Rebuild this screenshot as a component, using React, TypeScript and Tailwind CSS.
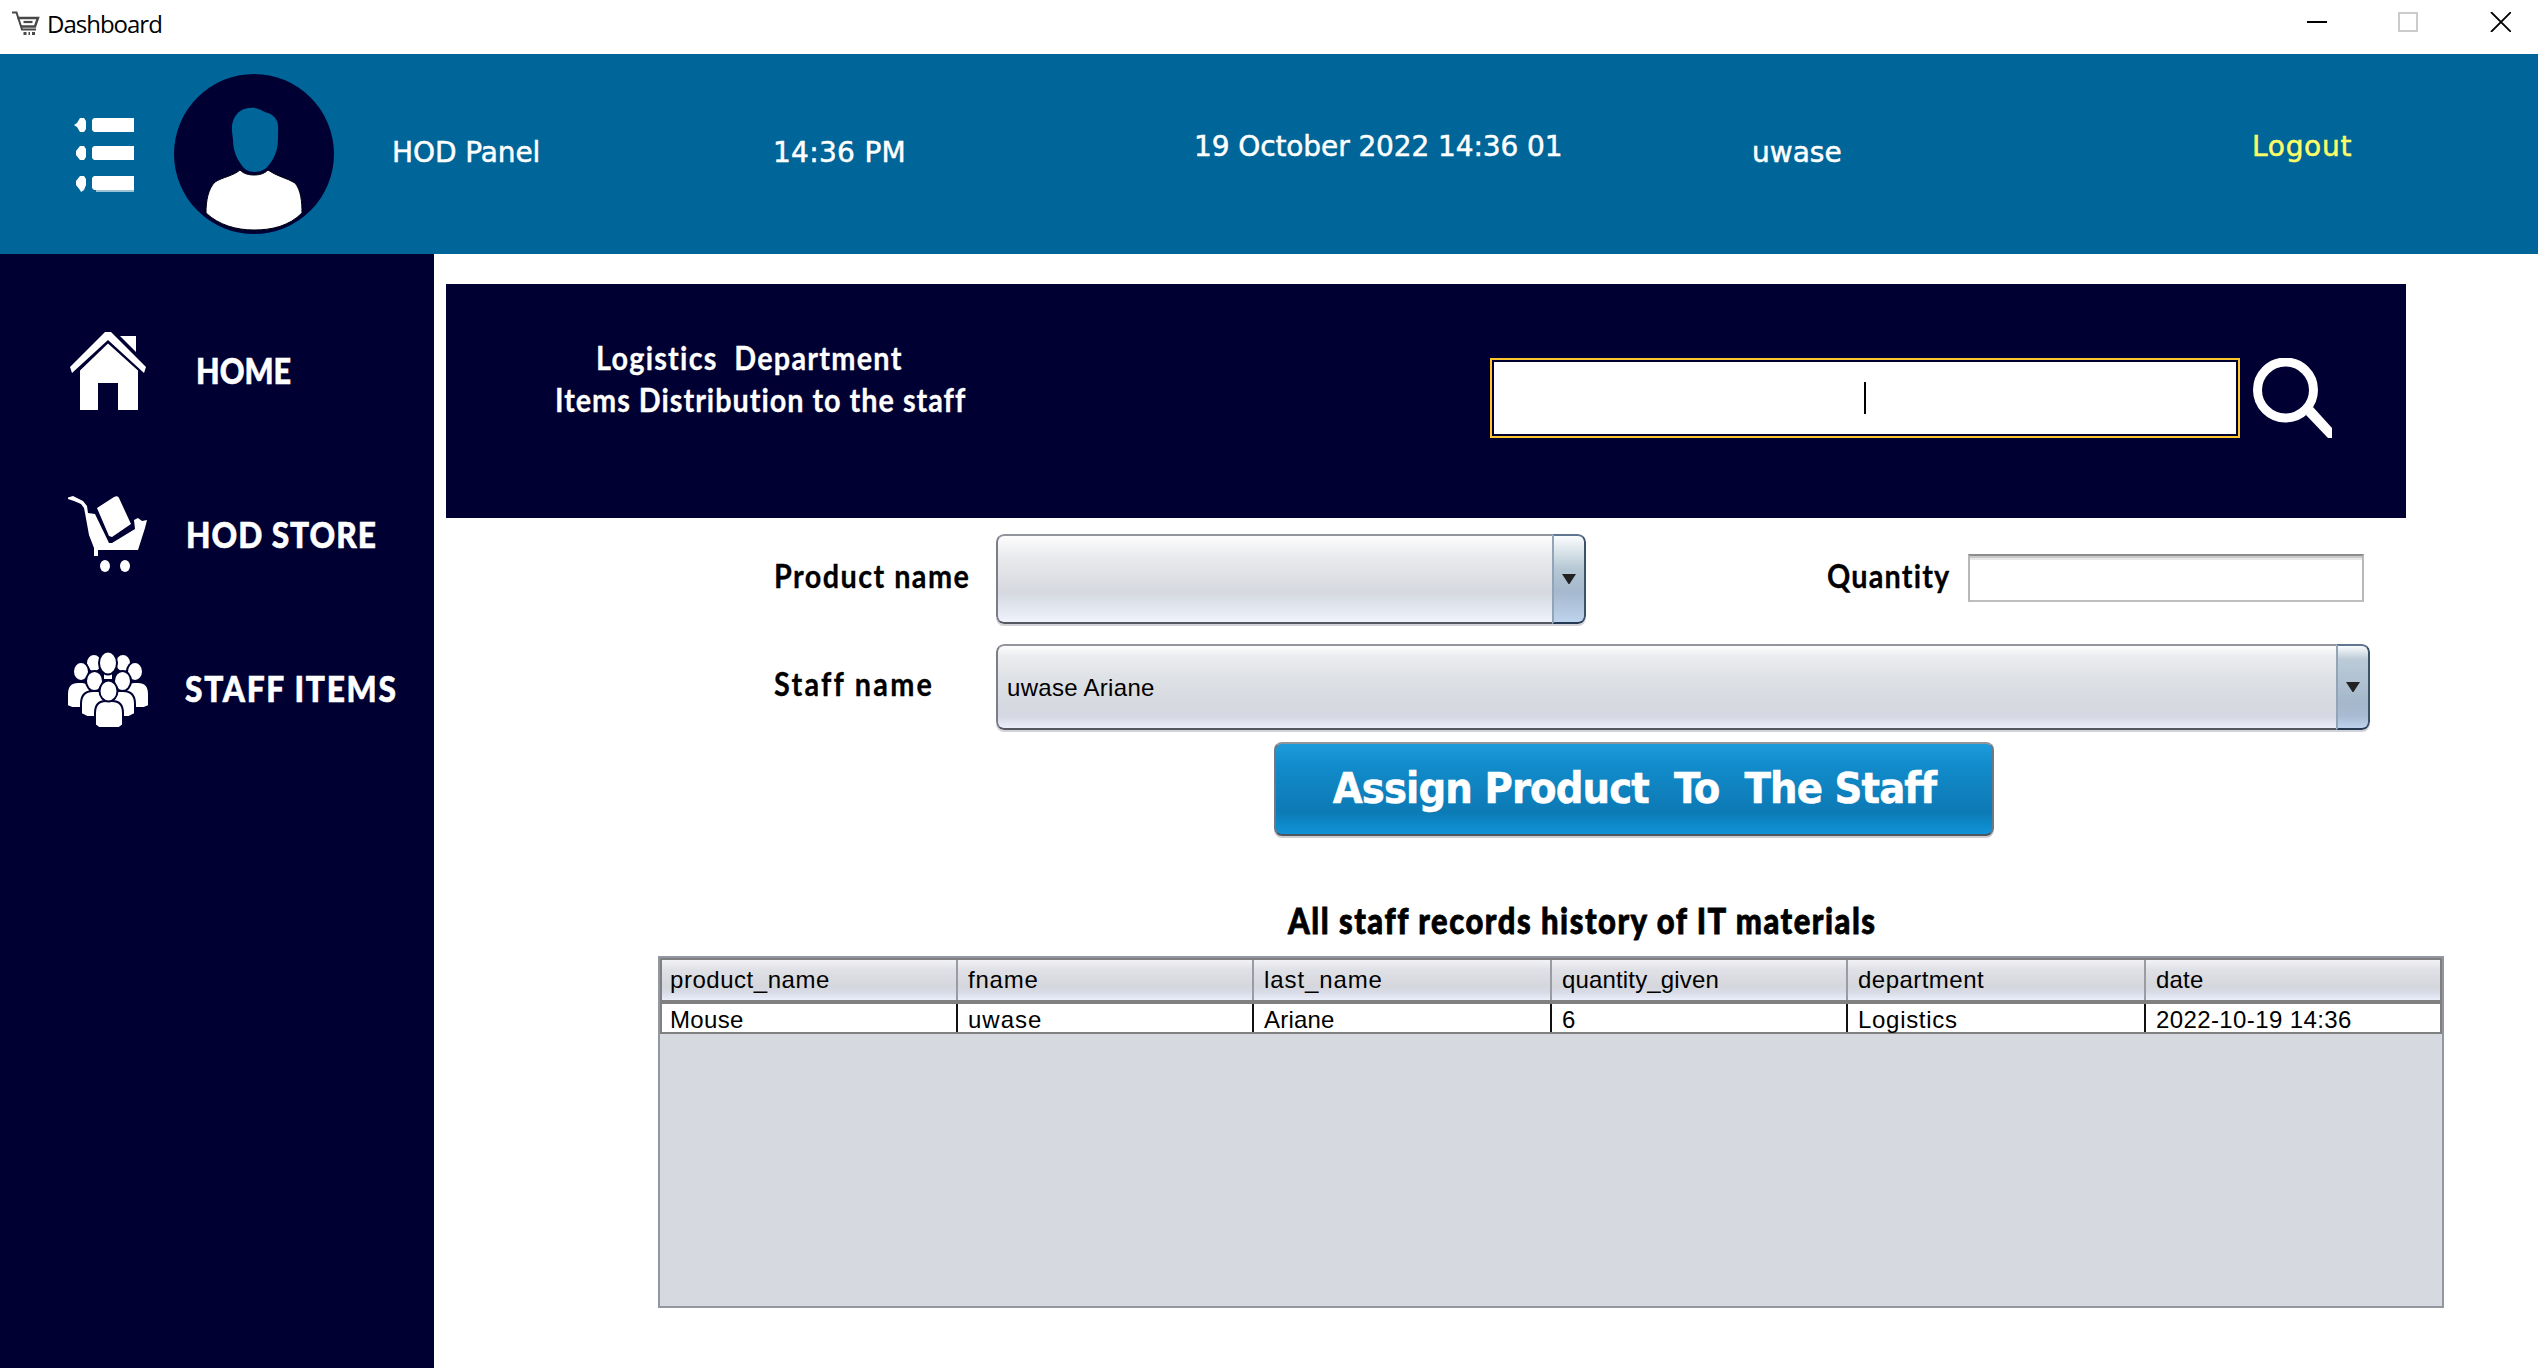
const HEAD = "font-['DejaVu_Sans',sans-serif] text-[28px] leading-[40px] [-webkit-text-stroke:0.5px]";
const NAV = "mt-[18px] origin-left font-['Lato',sans-serif] text-[36px] leading-[40px] font-black text-white [-webkit-text-stroke:0.6px]";
const FUTURA = "origin-left scale-x-90 font-['Lato',sans-serif] text-[32px] font-bold [-webkit-text-stroke:0.3px]";
const CELL = "font-['Liberation_Sans',Arial,sans-serif] text-[24px] text-black";

function Text({ className, children }: { className: string; children: string }) {
  return <span className={"block whitespace-pre " + className}>{children}</span>;
}

const HomeIcon = () => (
  <svg viewBox="0 0 80 80" className="size-20 shrink-0" fill="#fff">
    <path d="M37 0h6l35 35-2 6L40 8 4 41l-2-6z" />
    <path d="M52 4h16v16z" />
    <path d="M40 11.500l30 27v39.500H50V51H30v27H12V38.500z" />
  </svg>
);

const StoreIcon = () => (
  <svg viewBox="0 0 80 80" className="size-20 shrink-0" fill="#fff">
    <path d="M0 1.500L5 0l10 5 4 5 1 7 7 1 14 29h3l23-14-1-9 4-2 4 3 5-1-2 8-7 22H30v6h-4v-8l-5-13-4-22-1-5-3-4-7-3-6-2z" />
    <path d="M29 12L46 1q4-2 5 1l12 26-19 13-3-1z" />
    <ellipse cx="37" cy="70" rx="5" ry="6" />
    <ellipse cx="57" cy="70" rx="5" ry="6" />
  </svg>
);

const StaffIcon = () => (
  <svg viewBox="0 0 80 80" className="size-20 shrink-0" fill="#fff" stroke="#000033" strokeWidth="2">
    <ellipse cx="26" cy="11" rx="8" ry="9" />
    <ellipse cx="55" cy="11" rx="8" ry="9" />
    <path d="M35 21h10v7H35z" />
    <ellipse cx="40" cy="11" rx="9" ry="11.500" />
    <path d="M-1 54V42q0-12 11-12h4q7 0 8 8v18H4zM81 54V42q0-12-11-12h-4q-7 0-8 8v18h18z" />
    <ellipse cx="13" cy="19.500" rx="8" ry="9.500" />
    <ellipse cx="67" cy="19.500" rx="8" ry="9.500" />
    <path d="M13 62V52q0-13 12-13h6q6 0 6 8v18H19zM67 62V52q0-13-12-13h-6q-6 0-6 8v18h18z" />
    <ellipse cx="26.500" cy="29" rx="8.500" ry="10" />
    <ellipse cx="54.500" cy="29" rx="8.500" ry="10" />
    <path d="M27 73V61q0-12 11-12h6q11 0 11 12v12l-4 3H31z" />
    <ellipse cx="40.500" cy="39" rx="9" ry="10.500" />
  </svg>
);

const ITEMS = [
  { label: "HOME", icon: <HomeIcon />, row: "mt-[78px]", text: "ml-[48px] scale-x-[0.85]" },
  { label: "HOD STORE", icon: <StoreIcon />, row: "mt-[84px]", text: "ml-[38px] scale-x-[0.88] tracking-[1.1px]" },
  { label: "STAFF ITEMS", icon: <StaffIcon />, row: "mt-[76px]", text: "ml-[37px] -translate-y-0.5 scale-x-[0.88] tracking-[1.95px]" },
];

const COLUMNS = [
  { name: "product_name", tracking: "tracking-[0.54px]" },
  { name: "fname", tracking: "tracking-[0.79px]" },
  { name: "last_name", tracking: "tracking-[0.9px]" },
  { name: "quantity_given", tracking: "tracking-[0.16px]" },
  { name: "department", tracking: "tracking-[0.47px]" },
  { name: "date", tracking: "tracking-[0.21px]" },
];
const RECORD = [
  { value: "Mouse", tracking: "tracking-[0.33px]" },
  { value: "uwase", tracking: "tracking-[1px]" },
  { value: "Ariane", tracking: "tracking-[0.19px]" },
  { value: "6", tracking: "" },
  { value: "Logistics", tracking: "tracking-[0.7px]" },
  { value: "2022-10-19 14:36", tracking: "tracking-[0.39px]" },
];

function Combo({ size, face, arrow, value }: { size: string; face: string; arrow: string; value: string }) {
  return (
    <div className={"flex overflow-hidden rounded-[8px] shadow-[0_2px_0_#d2d3d8] " + size}>
      <div className={"flex flex-1 items-center rounded-l-[8px] border-y-2 border-l-2 border-t-[#92959b] border-b-[#555860] border-l-[#7b7e86] pl-[9px] " + face}>
        <Text className={CELL + " pt-px leading-[28px] tracking-[0.3px]"}>{value}</Text>
      </div>
      <div className={"flex w-[34px] items-center justify-center rounded-r-[8px] border-2 border-t-[#5f7690] border-r-[#3c526b] border-b-[#253a52] border-l-[#92a4b6] " + arrow}>
        <svg viewBox="0 0 14 10" className="h-[10px] w-[14px]" fill="#222">
          <path d="M0 0h14L7.500 10h-1z" />
        </svg>
      </div>
    </div>
  );
}

export default function App() {
  return (
    <div className="flex h-[1368px] w-[2538px] flex-col overflow-hidden bg-white">
      <div className="flex h-[54px] items-start">
        <svg viewBox="0 0 28 25" className="mt-[11px] ml-[12px] h-[25px] w-[28px]" fill="none" stroke="#484848" strokeWidth="2">
          <path d="M0 1.500h4.500L10 18.500h14" />
          <path d="M5.500 7h20.500L23 15.500H9" strokeWidth="2.400" />
          <path d="M11.500 11h9" strokeWidth="2.200" />
          <path d="M11.500 22.500h3M16.500 22.500h1.500M20 22.500h3" strokeWidth="3" />
        </svg>
        <Text className="mt-[4px] ml-[7px] flex-1 font-['Open_Sans',sans-serif] text-[24px] leading-[40px] tracking-[-1px] text-black">Dashboard</Text>
        <svg viewBox="0 0 204 20" className="mt-[12px] mr-[27px] h-[20px] w-[204px]" fill="none">
          <path d="M0 10h20" stroke="#000" strokeWidth="2" />
          <path d="M92 1h18v18H92z" stroke="#ccc" strokeWidth="2" />
          <path d="M184 0l20 20M204 0l-20 20" stroke="#000" strokeWidth="1.800" />
        </svg>
      </div>

      <header className="flex h-[200px] items-start bg-[#006699] text-white">
        <svg viewBox="0 0 60 74" className="mt-[64px] ml-[74px] h-[74px] w-[60px]" fill="#fff">
          <path d="M20 0h40v14H20l-2-2V2zM20 28h40v14H20l-2-2V30zM20 58h40v14H20l-2-2V60z" />
          <path d="M22 72h38v2H22z" opacity=".6" />
          <path d="M6 0h4l2 3v8l-2 3H6l-3-5-3-2 3-2zM6 28h4l2 3v8l-2 3H6l-4-5v-4zM6 58h4l2 3v6l-2 5-3 2-1-2-4-5v-4z" />
        </svg>
        <svg viewBox="0 0 160 160" className="mt-5 ml-[40px] size-[160px]">
          <circle cx="80" cy="80" r="80" fill="#000033" />
          <path d="M76 34c8-1 12 3 18 5 8 3 11 9 10 19v8c0 14-8 25-13 29-6 4-15 4-20 0-5-5-12-15-12-29l-1-9c-1-13 7-23 18-23z" fill="#006699" />
          <path d="M66 96c4 4 9 5 14 5s10-1 14-5c8 6 19 8 27 13 6 7 7 19 7 30-13 13-30 17-48 17s-35-5-48-17c0-12 2-24 9-31 8-5 18-6 25-12z" fill="#fff" stroke="#00000f" strokeWidth="1" />
        </svg>
        <Text className={HEAD + " mt-[79px] ml-[58px] w-[381px] tracking-[-0.1px]"}>HOD Panel</Text>
        <Text className={HEAD + " mt-[79px] w-[421px] tracking-[0.3px]"}>14:36 PM</Text>
        <Text className={HEAD + " mt-[73px] w-[558px] tracking-[-0.1px]"}>19 October 2022 14:36 01</Text>
        <Text className={HEAD + " mt-[79px] w-[500px]"}>uwase</Text>
        <Text className={HEAD + " mt-[73px] tracking-[0.7px] text-[#ffff66]"}>Logout</Text>
      </header>

      <div className="flex flex-1">
        <aside className="flex w-[434px] flex-col bg-[#000033]">
          {ITEMS.map((it) => (
            <div key={it.label} className={"flex h-20 items-start pl-[68px] " + it.row}>
              {it.icon}
              <Text className={NAV + " " + it.text}>{it.label}</Text>
            </div>
          ))}
        </aside>

        <main className="flex flex-1 flex-col items-start">
          <section className="mt-[30px] ml-3 flex h-[234px] w-[1960px] items-start bg-[#000033]">
            <div className="mt-[53px] w-[1044px] pl-[109px] leading-[42px] text-white">
              <Text className={FUTURA + " ml-[41px] tracking-[1.4px]"}>{"Logistics  Department"}</Text>
              <Text className={FUTURA + " tracking-[1.1px]"}>Items Distribution to the staff</Text>
            </div>
            <div className="mt-[74px] h-20 w-[750px] border-2 border-[#ffc72c] p-0.5">
              <div className="flex h-full items-start justify-center bg-white pt-5">
                <div className="h-8 w-0.5 bg-black" />
              </div>
            </div>
            <svg viewBox="0 0 80 80" className="mt-[74px] ml-3 size-20" fill="#fff">
              <circle cx="33.500" cy="32" r="28" fill="none" stroke="#fff" strokeWidth="9" />
              <path d="M61 49l19 21v10h-4L54 57z" />
            </svg>
          </section>

          <div className="mt-4 ml-[340px] flex items-start text-black">
            <Text className={FUTURA + " mt-[22px] w-[222px] leading-[40px] tracking-[1.6px]"}>Product name</Text>
            <Combo
              size="h-[90px] w-[590px]"
              face="bg-[linear-gradient(#fdfdfd,#e9eaed_25%,#d6d9df_65%,#d9dde5_72%,#f0f3fc)]"
              arrow="bg-[linear-gradient(#fafcfd,#b6c8d4_38%,#a4b8ce_65%,#bed4ec)]"
              value=""
            />
            <Text className={FUTURA + " mt-[22px] ml-[241px] w-[141px] leading-[40px] tracking-[1.33px]"}>Quantity</Text>
            <div className="mt-5 h-12 w-[396px] border-2 border-t-[#8c8c8c] border-r-[#b8b8b8] border-b-[#bebebe] border-l-[#b8b8b8] bg-[linear-gradient(#cacaca_2px,#e8e8e8_2px,#e8e8e8_4px,#fff_4px)]" />
          </div>

          <div className="mt-5 ml-[340px] flex items-start text-black">
            <Text className={FUTURA + " mt-5 w-[222px] leading-[40px] tracking-[2.5px]"}>Staff name</Text>
            <Combo
              size="h-[86px] w-[1374px]"
              face="bg-[linear-gradient(#fdfdfd,#ebecef_13%,#dcdfe3_45%,#d5d8df_75%,#d6d9e3_86%,#eceffa)]"
              arrow="bg-[linear-gradient(#fafcfd,#bccbd7_16%,#a4b7cb_70%,#a8bbd2_85%,#bdd2ec)]"
              value="uwase Ariane"
            />
          </div>

          <button className="mt-3 ml-[840px] flex h-[94px] w-[720px] items-center justify-center rounded-[8px] border-2 border-t-[#8f959b] border-r-[#6f7880] border-b-[#50565e] border-l-[#6f7880] bg-[linear-gradient(#1b9bdc,#128bca_25%,#0c7ab5_75%,#0f94d8)] pb-0.5 pl-px shadow-[0_2px_0_#cfcfd2]">
            <Text className="font-['DejaVu_Sans_Condensed','DejaVu_Sans',sans-serif] text-[43px] leading-[60px] font-bold tracking-[-0.9px] text-white [-webkit-text-stroke:0.5px]">{"Assign Product  To  The Staff"}</Text>
          </button>

          <Text className="mt-[64px] ml-[854px] origin-left scale-x-[0.86] font-['Lato',sans-serif] text-[36px] leading-[40px] font-black tracking-[1.78px] text-black [-webkit-text-stroke:0.8px]">All staff records history of IT materials</Text>

          <div className="mt-4 ml-[224px] flex h-[352px] w-[1786px] flex-col border-2 border-[#9297a1] bg-[#d6d9e0]">
            <div className="border-2 border-[#808080] bg-white">
              <div className="grid grid-cols-[296px_296px_298px_296px_298px_1fr] border-b-4 border-[#808080] bg-[linear-gradient(#f2f2f6,#e0e1e6_25%,#d5d7dd_65%,#d8dbe6_80%,#eaeefa)]">
                {COLUMNS.map((c) => (
                  <Text key={c.name} className={CELL + " h-10 border-r-2 border-[#9a9ca3] pl-[10px] leading-[40px] first:pl-2 last:border-r-0 " + c.tracking}>{c.name}</Text>
                ))}
              </div>
              <div className="grid grid-cols-[296px_296px_298px_296px_298px_1fr]">
                {RECORD.map((c) => (
                  <Text key={c.value} className={CELL + " h-7 border-r-2 border-[#111] pl-[10px] leading-[31px] first:pl-2 last:border-r-0 " + c.tracking}>{c.value}</Text>
                ))}
              </div>
            </div>
          </div>
        </main>
      </div>
    </div>
  );
}
